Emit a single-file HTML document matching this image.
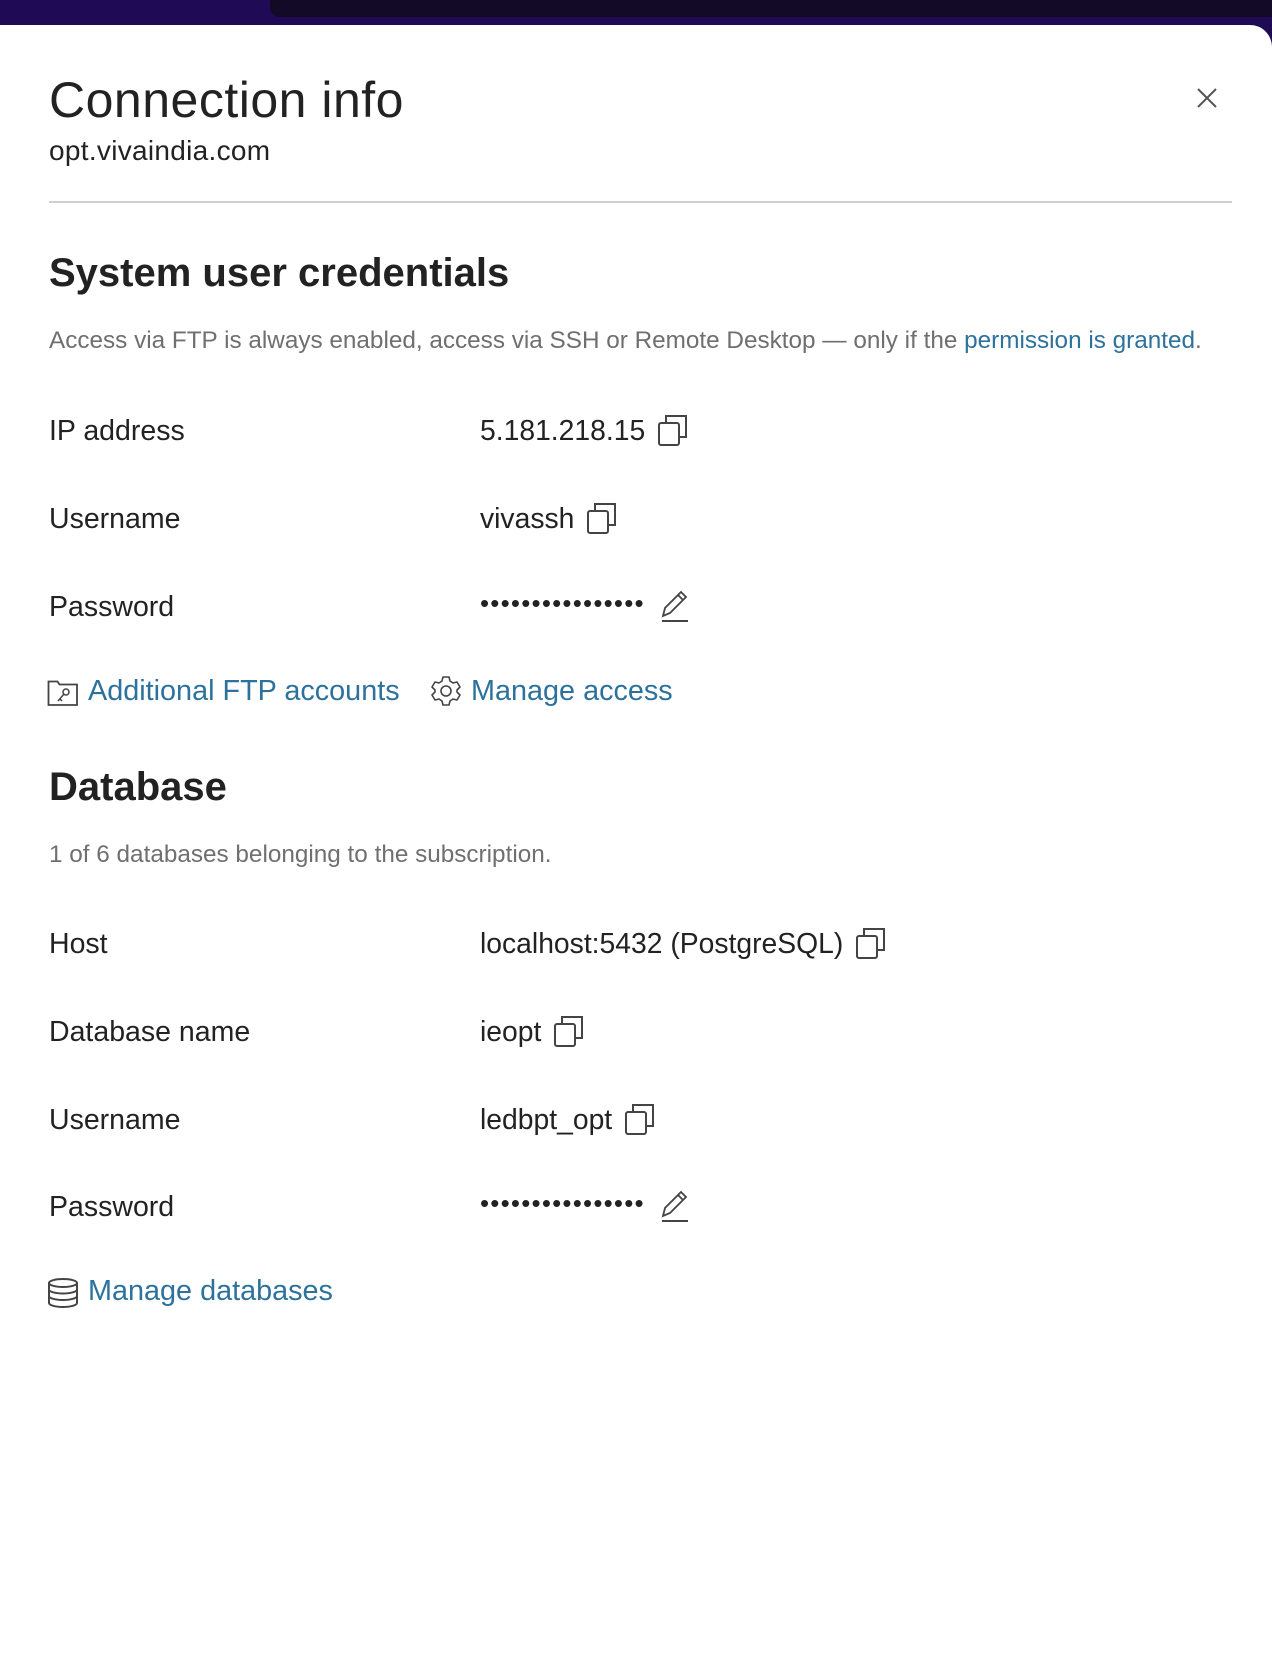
<!DOCTYPE html>
<html><head><meta charset="utf-8"><style>
*{margin:0;padding:0;box-sizing:border-box}
body{width:1272px;height:1660px;background:#1e0a55;font-family:"Liberation Sans","DejaVu Sans",sans-serif;position:relative;overflow:hidden}
.bar{position:absolute;left:270px;top:0;right:0;height:17px;background:#120a26;border-bottom-left-radius:10px}
.modal{position:absolute;left:0;top:25px;width:1272px;height:1640px;background:#fff;border-top-right-radius:22px}
.a{position:absolute;white-space:nowrap;color:#222}
.t{font-size:50px;left:49px;top:46px;color:#222;letter-spacing:0.5px}
.sub{font-size:28px;left:49px;top:110px;letter-spacing:0.3px}
.hr{position:absolute;left:49px;top:176px;width:1183px;height:2px;background:#cfcfcf}
.h{font-size:40px;font-weight:bold;left:49px;color:#222}
.d{font-size:24.3px;left:49px;color:#6f6f6f}
.l{font-size:28.5px;left:49px}
.v{font-size:28.3px;left:480px;display:flex;align-items:center}
.v svg{position:static;margin-left:12px}
.dots{letter-spacing:1.2px;font-size:26px;position:relative;top:-3px}
.lnk{color:#2c729c}
.k{font-size:28.8px;color:#2c729c}
svg{position:absolute}
</style></head><body>
<div class="bar"></div>
<div class="modal">
<div class="a t">Connection info</div>
<div class="a sub">opt.vivaindia.com</div>
<svg style="left:1196px;top:62px" width="22" height="22" viewBox="0 0 22 22"><path d="M2 2L20 20M20 2L2 20" stroke="#555" stroke-width="2"/></svg>
<div class="hr"></div>

<div class="a h" style="top:226px">System user credentials</div>
<div class="a d" style="top:302px">Access via FTP is always enabled, access via SSH or Remote Desktop — only if the <span class="lnk">permission is granted</span>.</div>

<div class="a l" style="top:390px">IP address</div>
<div class="a v" style="top:388px">5.181.218.15<svg width="32" height="34" viewBox="0 0 32 34"><rect x="2" y="10" width="20" height="22" rx="2" fill="none" stroke="#444" stroke-width="2"/><path d="M9 10V3h20v21h-7" fill="none" stroke="#444" stroke-width="2"/></svg></div>
<div class="a l" style="top:478px">Username</div>
<div class="a v" style="top:476px">vivassh<svg width="32" height="34" viewBox="0 0 32 34"><rect x="2" y="10" width="20" height="22" rx="2" fill="none" stroke="#444" stroke-width="2"/><path d="M9 10V3h20v21h-7" fill="none" stroke="#444" stroke-width="2"/></svg></div>
<div class="a l" style="top:566px">Password</div>
<div class="a v" style="top:563px"><span class="dots">••••••••••••••••</span><svg width="32" height="36" viewBox="0 0 32 36" style="margin-left:14px"><path d="M4 28l2-8L22 4l5 5L11 25z M19 7l5 5" fill="none" stroke="#444" stroke-width="1.8"/><path d="M3 33h26" stroke="#444" stroke-width="2"/></svg></div>

<div class="a k" style="left:88px;top:650px">Additional FTP accounts</div>
<div class="a k" style="left:471px;top:650px">Manage access</div>

<div class="a h" style="top:740px">Database</div>
<div class="a d" style="top:816px">1 of 6 databases belonging to the subscription.</div>

<div class="a l" style="top:903px">Host</div>
<div class="a v" style="top:901px">localhost:5432 (PostgreSQL)<svg width="32" height="34" viewBox="0 0 32 34"><rect x="2" y="10" width="20" height="22" rx="2" fill="none" stroke="#444" stroke-width="2"/><path d="M9 10V3h20v21h-7" fill="none" stroke="#444" stroke-width="2"/></svg></div>
<div class="a l" style="top:991px">Database name</div>
<div class="a v" style="top:989px">ieopt<svg width="32" height="34" viewBox="0 0 32 34"><rect x="2" y="10" width="20" height="22" rx="2" fill="none" stroke="#444" stroke-width="2"/><path d="M9 10V3h20v21h-7" fill="none" stroke="#444" stroke-width="2"/></svg></div>
<div class="a l" style="top:1079px">Username</div>
<div class="a v" style="top:1077px">ledbpt_opt<svg width="32" height="34" viewBox="0 0 32 34"><rect x="2" y="10" width="20" height="22" rx="2" fill="none" stroke="#444" stroke-width="2"/><path d="M9 10V3h20v21h-7" fill="none" stroke="#444" stroke-width="2"/></svg></div>
<div class="a l" style="top:1166px">Password</div>
<div class="a v" style="top:1163px"><span class="dots">••••••••••••••••</span><svg width="32" height="36" viewBox="0 0 32 36" style="margin-left:14px"><path d="M4 28l2-8L22 4l5 5L11 25z M19 7l5 5" fill="none" stroke="#444" stroke-width="1.8"/><path d="M3 33h26" stroke="#444" stroke-width="2"/></svg></div>

<div class="a k" style="left:88px;top:1250px">Manage databases</div>
</div>

<!-- folder key -->
<svg style="left:47px;top:679px" width="32" height="28" viewBox="0 0 32 28"><path d="M1.5 26V2.5h9l2 3h17.5V26z" fill="none" stroke="#444" stroke-width="1.8"/><circle cx="19" cy="13" r="3" fill="none" stroke="#444" stroke-width="1.5"/><path d="M17 15l-6 7M13 20l2 2" stroke="#444" stroke-width="1.5"/></svg>
<!-- gear -->
<svg style="left:430px;top:675px" width="32" height="32" viewBox="0 0 32 32"><path d="M13 2h6l1 4 3 2 4-1 3 5-3 3v2l3 3-3 5-4-1-3 2-1 4h-6l-1-4-3-2-4 1-3-5 3-3v-2L2 12l3-5 4 1 3-2z" fill="none" stroke="#444" stroke-width="1.6" stroke-linejoin="round"/><circle cx="16" cy="16" r="5" fill="none" stroke="#444" stroke-width="1.6"/></svg>
<!-- db -->
<svg style="left:47px;top:1277px" width="32" height="32" viewBox="0 0 32 32"><ellipse cx="16" cy="6" rx="14" ry="4" fill="none" stroke="#444" stroke-width="2"/><path d="M2 6v20c0 2.2 6.3 4 14 4s14-1.8 14-4V6M2 12.5c0 2.2 6.3 4 14 4s14-1.8 14-4M2 19c0 2.2 6.3 4 14 4s14-1.8 14-4" fill="none" stroke="#444" stroke-width="2"/></svg>
</body></html>
